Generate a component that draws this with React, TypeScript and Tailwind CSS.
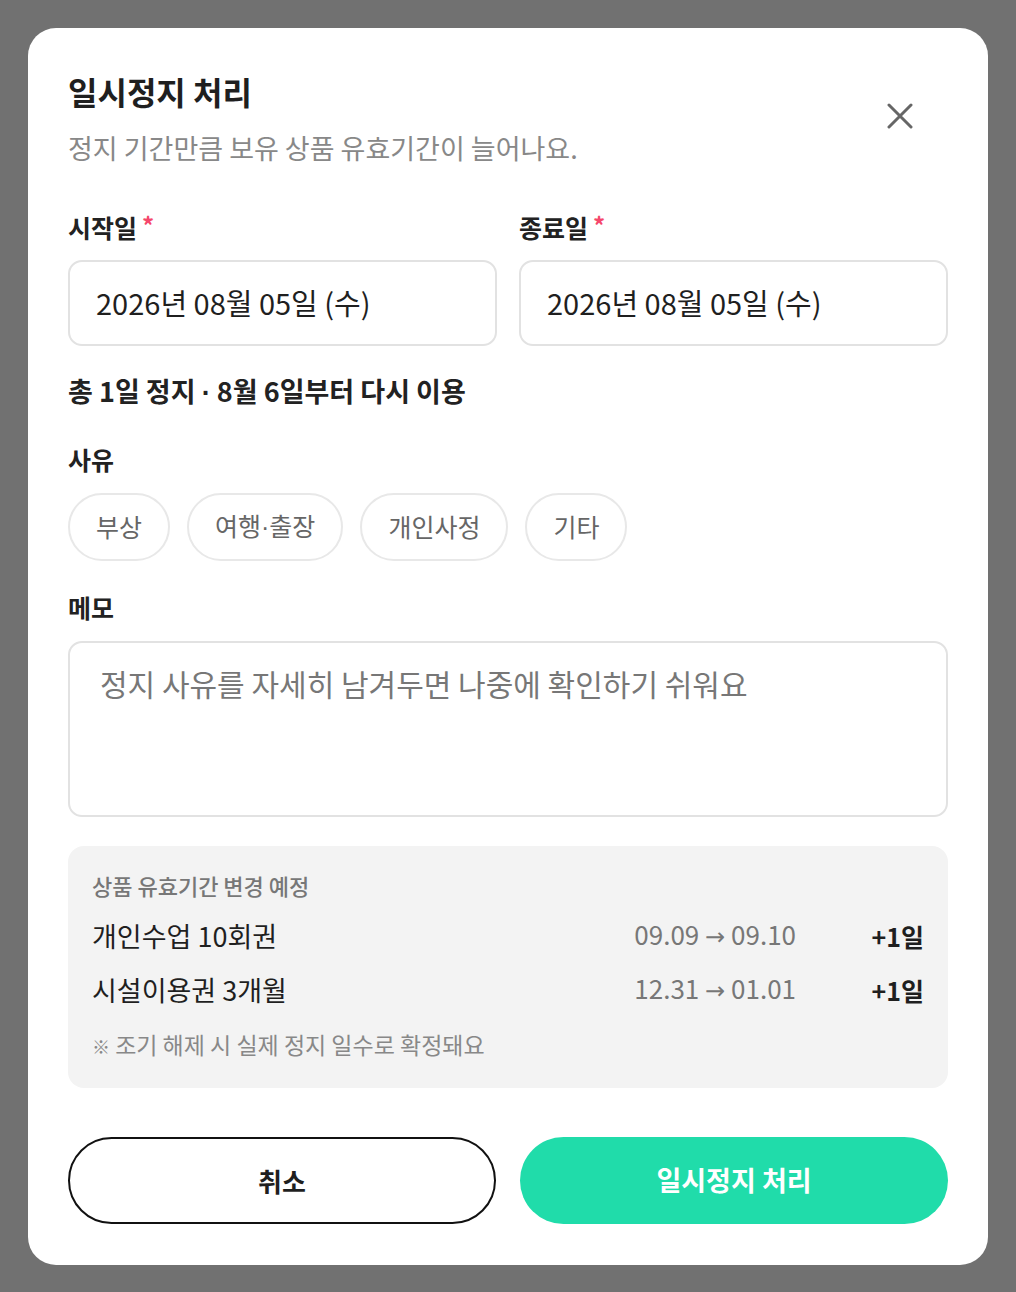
import { useState } from "react";

// ── Data ─────────────────────────────────────────────────────────────────────

const PRODUCTS = [
  { name: "개인수업 10회권", from: "09.09", to: "09.10", diff: "+1일" },
  { name: "시설이용권 3개월", from: "12.31", to: "01.01", diff: "+1일" },
];

// narrow Latin middle dot (CJK fonts draw it full width)
const Dot = () => <span className="font-['Liberation_Sans']">·</span>;

const REASONS: { id: string; label: React.ReactNode }[] = [
  { id: "injury", label: "부상" },
  {
    id: "trip",
    label: (
      <>
        여행
        <Dot />
        출장
      </>
    ),
  },
  { id: "personal", label: "개인사정" },
  { id: "etc", label: "기타" },
];

// ── Pieces ───────────────────────────────────────────────────────────────────

function FieldLabel({ children, required }: { children: string; required?: boolean }) {
  return (
    <div className="flex items-center gap-[5px] text-[25px] font-bold leading-[30px] text-[#222]">
      <span>{children}</span>
      {required && <span className="-mt-[4px] text-[24px] text-[#f5476b]">*</span>}
    </div>
  );
}

function DateBox({ value }: { value: string }) {
  return (
    <button className="flex h-[86px] w-full items-center rounded-[14px] border-2 border-[#e2e2e2] bg-white px-[26px] text-left text-[29px] text-[#1f1f1f]">
      {value}
    </button>
  );
}

function CloseIcon() {
  return (
    <svg width="26" height="26" viewBox="0 0 26 26" fill="none">
      <path
        d="M2 2L24 24M24 2L2 24"
        stroke="#666"
        strokeWidth="3"
        strokeLinecap="round"
      />
    </svg>
  );
}

// ── App ──────────────────────────────────────────────────────────────────────

export default function App() {
  const [reason, setReason] = useState<string | null>(null);
  const [memo, setMemo] = useState("");

  return (
    <div className="min-h-[1292px] bg-[#717171] p-[28px] font-['Noto_Sans_CJK_KR',sans-serif]">
      <div className="flex flex-col rounded-[28px] bg-white px-10 pb-[41px] pt-[43px]">
        {/* Header */}
        <div className="flex items-start justify-between">
          <div>
            <h2 className="text-[32px] font-bold leading-[40px] text-[#1f1f1f]">
              일시정지 처리
            </h2>
            <p className="mt-[20px] text-[27px] leading-[34px] text-[#888]">
              정지 기간만큼 보유 상품 유효기간이 늘어나요.
            </p>
          </div>
          <button
            aria-label="닫기"
            className="mr-6 mt-[21px] flex h-12 w-12 items-center justify-center"
          >
            <CloseIcon />
          </button>
        </div>

        {/* Dates */}
        <div className="mt-[47px] grid grid-cols-2 gap-[22px]">
          <div>
            <FieldLabel required>시작일</FieldLabel>
            <div className="mt-[18px]">
              <DateBox value="2026년 08월 05일 (수)" />
            </div>
          </div>
          <div>
            <FieldLabel required>종료일</FieldLabel>
            <div className="mt-[18px]">
              <DateBox value="2026년 08월 05일 (수)" />
            </div>
          </div>
        </div>

        <p className="mt-[29px] text-[27px] font-bold leading-[32px] text-[#222]">
          총 1일 정지 <Dot /> 8월 6일부터 다시 이용
        </p>

        {/* Reason */}
        <div className="mt-[35px]">
          <FieldLabel>사유</FieldLabel>
        </div>
        <div className="mt-[19px] flex gap-[17px]">
          {REASONS.map((r) => (
            <button
              key={r.id}
              onClick={() => setReason(r.id)}
              className={
                reason === r.id
                  ? "h-[68px] rounded-full border-2 border-[#20dcaa] px-[26px] text-[25px] text-[#20dcaa]"
                  : "h-[68px] rounded-full border-2 border-[#e8e8e8] px-[26px] text-[25px] text-[#666]"
              }
            >
              {r.label}
            </button>
          ))}
        </div>

        {/* Memo */}
        <div className="mt-[31px]">
          <FieldLabel>메모</FieldLabel>
        </div>
        <textarea
          value={memo}
          onChange={(e) => setMemo(e.target.value)}
          placeholder="정지 사유를 자세히 남겨두면 나중에 확인하기 쉬워요"
          className="mt-[19px] h-[176px] w-full resize-none rounded-[14px] border-2 border-[#e2e2e2] px-[30px] pt-[20px] text-[30px] leading-[40px] text-[#222] outline-none placeholder:text-[#777]"
        />

        {/* Expiry preview */}
        <div className="mt-[29px] rounded-[16px] bg-[#f3f3f3] px-6 pb-[28px] pt-[25px]">
          <p className="text-[22px] font-medium leading-[28px] text-[#777]">
            상품 유효기간 변경 예정
          </p>
          <div className="mt-[17px] flex flex-col gap-[15px]">
            {PRODUCTS.map((p) => (
              <div key={p.name} className="flex items-center leading-[36px]">
                <span className="flex-1 text-[27px] text-[#1f1f1f]">{p.name}</span>
                <span className="text-[26px] text-[#777]">
                  {p.from} <span className="font-['DejaVu_Sans'] text-[24px]">→</span> {p.to}
                </span>
                <span className="w-[128px] text-right text-[25px] font-bold text-[#1f1f1f]">
                  {p.diff}
                </span>
              </div>
            ))}
          </div>
          <p className="mt-[21px] text-[23px] leading-[28px] text-[#888]">
            <span className="text-[18px]">※</span> 조기 해제 시 실제 정지 일수로 확정돼요
          </p>
        </div>

        {/* Actions */}
        <div className="mt-[49px] grid grid-cols-2 gap-[24px]">
          <button className="h-[87px] rounded-full border-2 border-[#111] bg-white text-[26px] font-semibold text-[#1f1f1f]">
            취소
          </button>
          <button className="h-[87px] rounded-full bg-[#20dcaa] text-[27px] font-semibold text-white">
            일시정지 처리
          </button>
        </div>
      </div>
    </div>
  );
}
